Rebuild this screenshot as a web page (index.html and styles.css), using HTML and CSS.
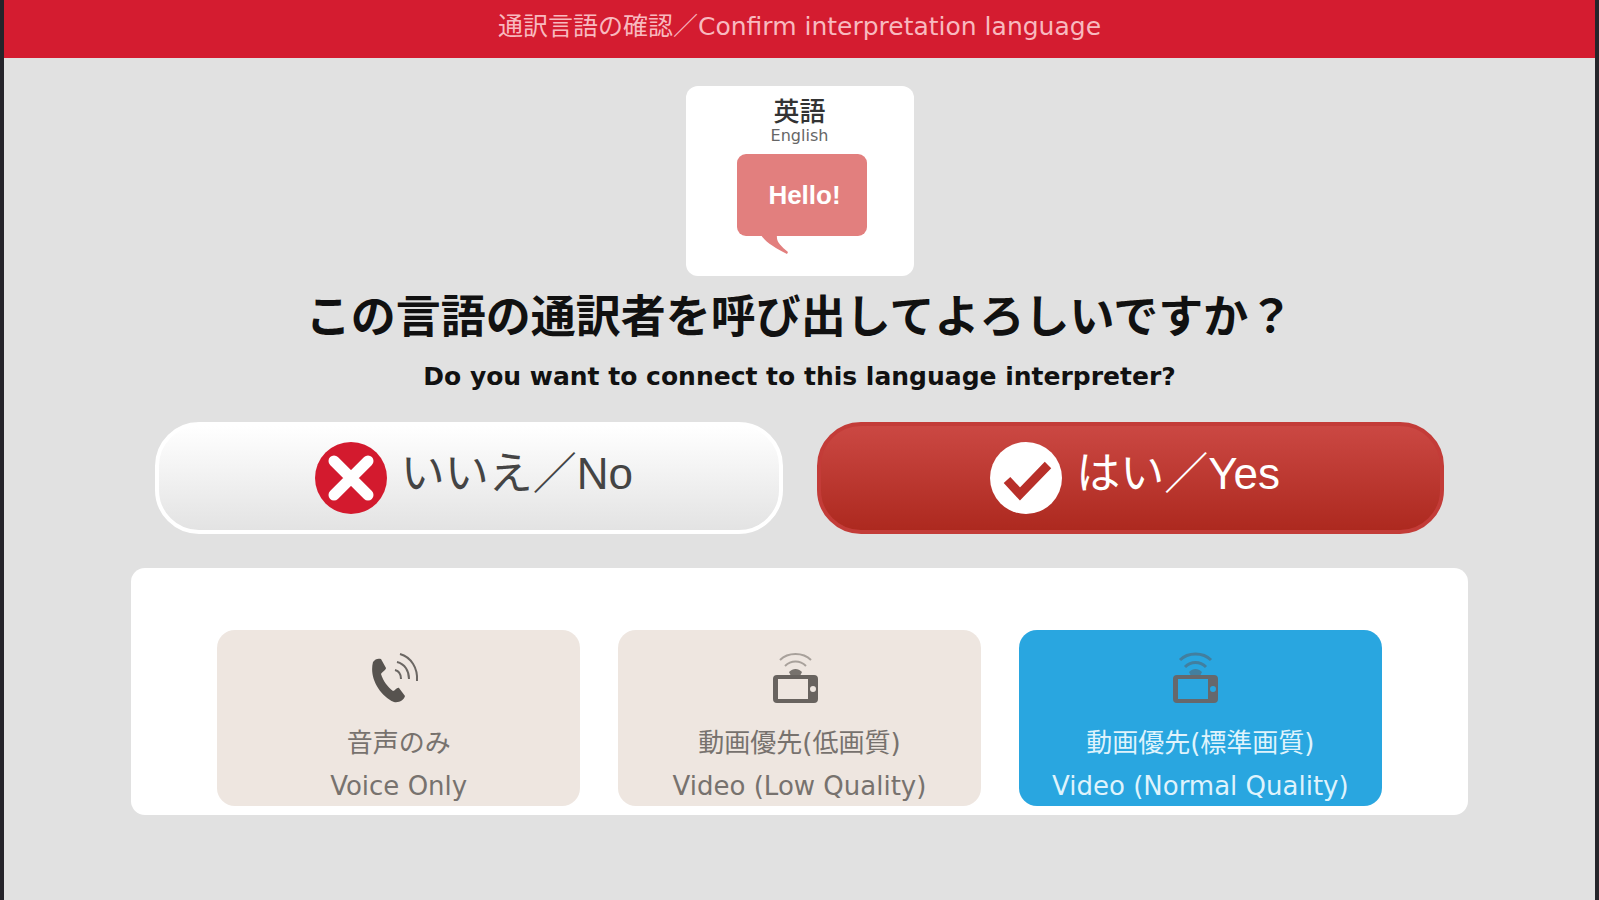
FILE: index.html
```html
<!DOCTYPE html>
<html lang="ja">
<head>
  <meta charset="UTF-8">
  <meta name="viewport" content="width=device-width, initial-scale=1">
  <title>通訳言語の確認</title>
  <link rel="stylesheet" href="styles.css">
</head>
<body>

<header class="header">通訳言語の確認／Confirm interpretation language</header>

<main>
  <div class="language">
    <div class="language-ja">英語</div>
    <div class="language-en">English</div>
    <div class="bubble">Hello!
      <svg class="tail" viewBox="0 0 30 19" aria-hidden="true"><path d="M0 0 C5 8 15 13 26 19 L27 17 C20 11 15 7 16 0 Z" fill="#e27f7e"/></svg>
    </div>
  </div>

  <h1>この言語の通訳者を呼び出してよろしいですか？</h1>
  <p class="question-en">Do you want to connect to this language interpreter?</p>

  <form>
    <div class="answers">
      <button type="button" class="answer no">
        <svg viewBox="0 0 72 72" aria-hidden="true">
          <circle cx="36" cy="36" r="36" fill="#d31a2e"/>
          <path d="M19 19 L53 53 M53 19 L19 53" stroke="#fff" stroke-width="11" stroke-linecap="round"/>
        </svg>
        <span>いいえ／No</span>
      </button>
      <button type="button" class="answer yes">
        <svg viewBox="0 0 72 72" aria-hidden="true">
          <circle cx="36" cy="36" r="36" fill="#fff"/>
          <path d="M17 38 L30 52 L58 23" fill="none" stroke="#b82f29" stroke-width="9"/>
        </svg>
        <span>はい／Yes</span>
      </button>
    </div>

    <div class="modes">
      <label class="mode">
        <input type="radio" name="mode" value="voice">
        <svg viewBox="0 0 50 52" aria-hidden="true">
          <path d="M3 10 C5 7 8 6 11 7 L16 16 C16 18 12 20 11 22 C13 29 18 35 23 39 C25 39 27 35 29 36 L35 44 C34 48 29 51 24 50 C9 43 -1 25 3 10 Z" fill="#57534f"/>
          <g fill="none" stroke="#6b6763" stroke-width="2">
            <path d="M25 18 C29 19 31 23 31 27"/>
            <path d="M27 10 C35 12 39 19 39 27"/>
            <path d="M30 2 C41 5 48 16 47 29"/>
          </g>
        </svg>
        <span>音声のみ</span>
        <span>Voice Only</span>
      </label>
      <label class="mode">
        <input type="radio" name="mode" value="low">
        <svg viewBox="0 0 50 52" aria-hidden="true">
          <g fill="none" stroke="#a8a19b" stroke-width="2">
            <path d="M9 8 C17 0 32 0 40 8"/>
            <path d="M14 14 C20 8 29 8 35 14"/>
          </g>
          <path d="M18 20 C22 16 27 16 31 20 L29 24 H20 Z" fill="#77726d"/>
          <path fill-rule="evenodd" d="M6 23 H43 Q47 23 47 27 V47 Q47 51 43 51 H6 Q2 51 2 47 V27 Q2 23 6 23 Z M7 27 V47 H37 V27 Z M42 34 A3 3 0 1 0 42 40 A3 3 0 1 0 42 34 Z" fill="#68635f"/>
        </svg>
        <span>動画優先(低画質)</span>
        <span>Video (Low Quality)</span>
      </label>
      <label class="mode">
        <input type="radio" name="mode" value="normal" checked>
        <svg viewBox="0 0 50 52" aria-hidden="true">
          <g fill="none" stroke="#427f9f" stroke-width="3">
            <path d="M9 8 C17 0 32 0 40 8"/>
            <path d="M14 15 C20 9 29 9 35 15"/>
          </g>
          <path d="M18 20 C22 16 27 16 31 20 L29 24 H20 Z" fill="#427f9f"/>
          <path fill-rule="evenodd" d="M6 23 H43 Q47 23 47 27 V47 Q47 51 43 51 H6 Q2 51 2 47 V27 Q2 23 6 23 Z M7 27 V47 H37 V27 Z M42 34 A3 3 0 1 0 42 40 A3 3 0 1 0 42 34 Z" fill="#66686c"/>
        </svg>
        <span>動画優先(標準画質)</span>
        <span>Video (Normal Quality)</span>
      </label>
    </div>
  </form>
</main>

</body>
</html>
```
FILE: styles.css
```css
* { box-sizing: border-box; }
body {
  margin: 0;
  min-height: 100vh;
  background: #e1e1e1;
  border: solid #25242a;
  border-width: 0 4px;
  font-family: "DejaVu Sans", "Noto Sans CJK JP", sans-serif;
  text-align: center;
}
.header {
  background: #d41c30;
  color: #f8b9bf;
  font-size: 25px;
  line-height: 54px;
  padding-bottom: 4px;
}
main { padding: 28px 8% 0; }

.language {
  width: 228px;
  height: 190px;
  margin: 0 auto;
  padding-top: 10px;
  background: #fff;
  border-radius: 12px;
}
.language-ja {
  font-size: 26px;
  font-weight: 500;
  line-height: 32px;
  color: #333;
}
.language-en {
  font-size: 16px;
  line-height: 16px;
  color: #666;
}
.bubble {
  position: relative;
  width: 130px;
  height: 82px;
  margin: 10px auto 0 51px;
  padding-left: 6px;
  border-radius: 9px;
  background: #e27f7e;
  color: #fff;
  font: bold 26px/82px "Liberation Sans", sans-serif;
}
.tail {
  position: absolute;
  left: 24px;
  top: 81px;
  width: 30px;
  height: 19px;
}

h1 {
  margin: 6px 0 0;
  font-size: 45px;
  line-height: 64px;
  font-family: "Noto Sans CJK JP", sans-serif;
  color: #111;
}
.question-en {
  margin: 15px 0 29px;
  font-size: 25px;
  line-height: 32px;
  font-weight: bold;
  color: #111;
}

.answers {
  display: flex;
  gap: 34px;
  padding: 0 24px;
}
.answer {
  flex: 1;
  height: 112px;
  display: flex;
  align-items: center;
  justify-content: center;
  gap: 14px;
  padding: 0 0 0 10px;
  border: 4px solid;
  border-radius: 44px;
  font: 44px/64px "Liberation Sans", "Noto Sans CJK JP", sans-serif;
}
.answer svg { width: 72px; height: 72px; }
.answer span { padding-bottom: 8px; }
.no {
  background: linear-gradient(#fff, #e3e3e3);
  border-color: #fff;
  color: #444;
}
.yes {
  background: linear-gradient(#cb4843, #ad291f);
  border-color: #c33c38;
  color: #fff;
}

.modes {
  display: flex;
  gap: 38px;
  margin-top: 34px;
  padding: 62px 86px 9px;
  background: #fff;
  border-radius: 14px;
}
.mode {
  flex: 1;
  height: 176px;
  padding-top: 22px;
  background: #eee6e0;
  border-radius: 18px;
  color: #77726e;
  font-size: 26px;
  line-height: 43px;
  cursor: pointer;
}
.mode input {
  position: absolute;
  opacity: 0;
}
.mode svg {
  display: block;
  width: 58px;
  height: 52px;
  padding-right: 8px;
  margin: 0 auto 18px;
}
.mode span { display: block; }
.mode:has(input:checked) {
  background: #29a6e0;
  color: #dff3fc;
}
```
